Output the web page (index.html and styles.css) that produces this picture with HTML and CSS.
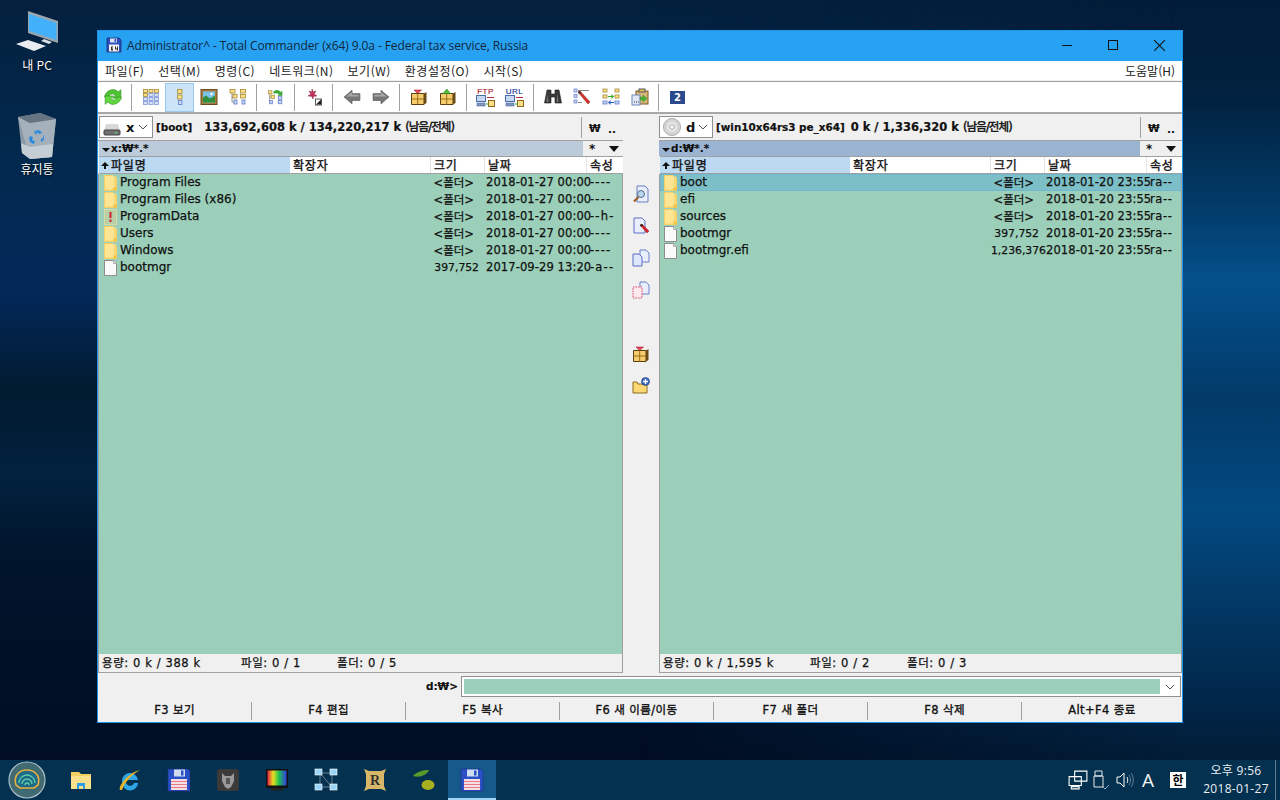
FILE: index.html
```html
<!DOCTYPE html>
<html lang="ko">
<head>
<meta charset="utf-8">
<title>Total Commander</title>
<link rel="stylesheet" href="styles.css">
</head>
<body>
<svg class="defs" aria-hidden="true">
  <defs>
    <symbol id="floppy" viewBox="0 0 16 16">
      <path d="M1 1h12l2 2v12H1z" fill="#2b4fb8" stroke="#1c2f78" stroke-width=".8"/>
      <rect x="4" y="1.500" width="7" height="4" fill="#d8e2f5"/><rect x="8.500" y="2" width="1.600" height="3" fill="#2b4fb8"/>
      <rect x="3" y="7.500" width="10" height="7" fill="#f4f2f2"/>
      <path d="M5 9.500h2v1H6v1h1v2H5zM9 9.500h1v2h1v-2h1v4h-1v-1H9z" fill="#333"/>
    </symbol>
    <symbol id="floppy-big" viewBox="0 0 24 24">
      <path d="M1 1h20l2 2v20H1z" fill="#2a50c8" stroke="#1c2f78" stroke-width=".6"/>
      <rect x="7" y="1.500" width="11" height="7" fill="#d0dcf0"/><rect x="14" y="2.500" width="2.500" height="5" fill="#2a50c8"/>
      <rect x="4" y="11" width="16" height="11" fill="#f6dfe2"/>
      <path d="M4 13.500h16M4 16.500h16M4 19.500h16" stroke="#e87a8a" stroke-width="1"/>
    </symbol>
    <symbol id="folder" viewBox="0 0 13 16">
      <path d="M.5.500h8.500l1 1v14H.5z" fill="#fde594"/>
      <path d="M10 1.500h2.500v14H.5v-1H9.500z" fill="#fcd874"/>
      <path d="M.5 15.500V.5h8.500M12.500 4v11.500H.5" fill="none" stroke="#f6cf66"/>
      <path d="M9.500 12.500h3v3h-3z" fill="#f3c041"/>
    </symbol>
    <symbol id="warnfolder" viewBox="0 0 13 16">
      <rect x=".5" y=".5" width="12" height="15" fill="#b9cfa8" stroke="#dcd9a0"/>
      <rect x="5.500" y="3" width="2" height="6" fill="#d0202a"/><rect x="5.500" y="10.500" width="2" height="2.500" fill="#d0202a"/>
    </symbol>
    <symbol id="file" viewBox="0 0 13 16">
      <path d="M.5.500h9l3 3v12H.5z" fill="#fafafa" stroke="#8c8c8c"/>
      <path d="M9.500.500v3h3" fill="#e0e0e0" stroke="#b0b0b0"/>
    </symbol>
    <symbol id="refresh" viewBox="1 1 16 16">
      <path d="M1.500 9C2 3.500 10 0 13.500 4.500L16 2.500V10H8.500l2.500-2.500C9 5.500 6 6 5 9z" fill="#4fc433" stroke="#2d8a1c" stroke-width=".5"/>
      <path d="M16.500 9c-.5 5.500-8.500 9-12 4.500L2 15.500V8h7.500L7 10.500c2 2 5 1.500 6-1.500z" fill="#62d63f" stroke="#2d8a1c" stroke-width=".5"/>
    </symbol>
    <symbol id="cols3" viewBox="0 0 18 18">
      <g fill="#ffdf85" stroke="#a48b3a" stroke-width=".8"><rect x="1.500" y="1.500" width="4" height="3"/><rect x="1.500" y="5.500" width="4" height="3"/><rect x="7" y="1.500" width="4" height="3"/><rect x="12.500" y="1.500" width="4" height="3"/></g>
      <g fill="#d6e2f8" stroke="#7f94d8" stroke-width=".8"><rect x="1.500" y="9.500" width="4" height="3"/><rect x="1.500" y="13.500" width="4" height="3"/><rect x="7" y="5.500" width="4" height="3"/><rect x="7" y="9.500" width="4" height="3"/><rect x="7" y="13.500" width="4" height="3"/><rect x="12.500" y="5.500" width="4" height="3"/><rect x="12.500" y="9.500" width="4" height="3"/><rect x="12.500" y="13.500" width="4" height="3"/></g>
    </symbol>
    <symbol id="cols1" viewBox="0 0 18 18">
      <g fill="#ffdf85" stroke="#a48b3a" stroke-width=".8"><rect x="6.500" y="1.500" width="4.500" height="4"/><rect x="6.500" y="7" width="4.500" height="4"/></g>
      <rect x="7.500" y="12.500" width="3.500" height="4" fill="#c6d8f4" stroke="#5f78c8" stroke-width=".8"/>
    </symbol>
    <symbol id="picture" viewBox="0 0 18 18">
      <rect x="1" y="1.500" width="16" height="15" fill="#a87b3e" stroke="#6b4a1f"/>
      <rect x="3" y="3.500" width="12" height="11" fill="#7cc3ea"/>
      <path d="M3 14.500v-5l3-2 4 3 5-3v7z" fill="#2f8f3c"/><circle cx="11.500" cy="6" r="1.200" fill="#fff"/>
    </symbol>
    <symbol id="cols2" viewBox="0 0 18 18">
      <path d="M3 5v9h2M3 9.500h2" stroke="#777" fill="none" stroke-width=".8"/>
      <g fill="#ffdf85" stroke="#a48b3a" stroke-width=".8"><rect x="1" y="1.500" width="5" height="3.500"/><rect x="4" y="6.500" width="4" height="3.500"/><rect x="11.500" y="1.500" width="5" height="3.500"/><rect x="11.500" y="6.500" width="5" height="3.500"/></g>
      <g fill="#c6d8f4" stroke="#5f78c8" stroke-width=".8"><rect x="5" y="12" width="3" height="4"/><rect x="13" y="12" width="3" height="4"/></g>
    </symbol>
    <symbol id="sync" viewBox="0 0 20 18">
      <path d="M3 5v10h2M3 9h2" stroke="#777" fill="none" stroke-width=".8"/>
      <g fill="#ffdf85" stroke="#a48b3a" stroke-width=".8"><rect x="1.500" y="2" width="4" height="3.500"/><rect x="4.500" y="7" width="4" height="3.500"/></g>
      <g fill="#c6d8f4" stroke="#5f78c8" stroke-width=".8"><rect x="3" y="13" width="3" height="3.500"/><rect x="12.500" y="8" width="4" height="3.500"/><rect x="12.500" y="13" width="4" height="3.500"/></g>
      <path d="M7 3c3-2.500 6-2.500 8 .5L17 2v5.500h-5.500L13.300 6C11.500 4.500 9.500 4.500 7.500 5.500z" fill="#3ca83a"/>
    </symbol>
    <symbol id="star" viewBox="0 0 18 18">
      <path d="M7 1l1 3 3-1-2 3 3 2-3.500.3L8 11 6.700 8.300 3 8l3-2-2-3 3 1z" fill="#c22f58" stroke="#8f2144" stroke-width=".5"/>
      <rect x="10.500" y="11" width="6" height="6" fill="#fff" stroke="#555"/><path d="M11 16.500l5-5v5z" fill="#222"/>
    </symbol>
    <symbol id="left" viewBox="0 0 16 16"><path d="M1 8l7-6v3h7v6H8v3z" fill="#777" stroke="#5e5e5e" stroke-width=".7"/><path d="M2.500 8L8 3.500V6h6v1.500H4z" fill="#a6a6a6"/></symbol>
    <symbol id="right" viewBox="0 0 16 16"><path d="M15 8L8 2v3H1v6h7v3z" fill="#777" stroke="#5e5e5e" stroke-width=".7"/><path d="M13.500 8L8 3.500V6H2v1.500h10z" fill="#a6a6a6"/></symbol>
    <symbol id="boxred" viewBox="0 0 18 18">
      <path d="M1.500 5.500h12.500v11H1.500z" fill="#f6cd6c" stroke="#5b3f10"/><path d="M14 5.500l2.500-1.500v11L14 16.500z" fill="#6a4a16"/>
      <path d="M1.500 11h12.500M7.700 5.500v11" stroke="#9b6d1d"/><path d="M4 2h7.500L7.700 5.500z" fill="#e84a5a" stroke="#a82030" stroke-width=".6"/>
    </symbol>
    <symbol id="boxgreen" viewBox="0 0 18 18">
      <path d="M1.500 5.500h12.500v11H1.500z" fill="#f6cd6c" stroke="#5b3f10"/><path d="M14 5.500l2.500-1.500v11L14 16.500z" fill="#6a4a16"/>
      <path d="M1.500 11h12.500M7.700 5.500v11" stroke="#9b6d1d"/><path d="M4 5.500h7.500L7.700 1z" fill="#55c03a" stroke="#2e8a1e" stroke-width=".6"/>
    </symbol>
    <symbol id="net" viewBox="0 0 20 12">
      <rect x=".5" y=".5" width="9" height="6" fill="#c6d8f4" stroke="#4a6aa8"/><rect x="1" y="8" width="8" height="3" fill="#7f94bc" stroke="#4a6aa8" stroke-width=".6"/>
      <rect x="12.500" y="5.500" width="6" height="6" fill="#ffdf85" stroke="#8a6a20"/><path d="M10 9h3" stroke="#2fa52a"/><path d="M11 2.500h7" stroke="#b02a3a"/>
    </symbol>
    <symbol id="bino" viewBox="0 0 18 18">
      <path d="M3 2h4v4h4V2h4l2.500 13H11V9H7v6H.5z" fill="#3a3a3a" stroke="#1c1c1c" stroke-width=".6"/>
      <path d="M3.500 6l-1 8h2zM13.500 6l-1 8h2z" fill="#777"/>
    </symbol>
    <symbol id="edit" viewBox="0 0 18 18">
      <g fill="#c6d8f4" stroke="#5f78c8" stroke-width=".7"><rect x="1" y="1" width="3" height="3"/><rect x="1" y="6.500" width="3" height="3"/><rect x="1" y="12" width="3" height="3"/></g>
      <path d="M5 2.500h11M5 14.500h4" stroke="#888"/>
      <path d="M5 4l2-1 10 11-2 2z" fill="#d8322a" stroke="#8a1a14" stroke-width=".5"/><path d="M5 4l2-1 1 2-2 1z" fill="#333"/>
    </symbol>
    <symbol id="multi" viewBox="0 0 18 18">
      <g fill="#ffdf85" stroke="#a48b3a" stroke-width=".8"><rect x="1" y="1" width="4" height="3"/><rect x="13" y="1" width="4" height="3"/><rect x="1" y="7" width="4" height="3"/><rect x="13" y="7" width="4" height="3"/></g>
      <g fill="#c6d8f4" stroke="#5f78c8" stroke-width=".8"><rect x="1" y="13" width="4" height="3"/><rect x="13" y="13" width="4" height="3"/></g>
      <path d="M6 8h3.500V6L12 8.500 9.500 11V9H6z" fill="#2fa52a"/><path d="M12 14H8.500v-2L6 14.500 8.500 17v-2H12z" fill="#2a60c0"/>
    </symbol>
    <symbol id="clip" viewBox="0 0 18 18">
      <rect x="5" y="3" width="12" height="13" fill="#d8b878" stroke="#7a5a20"/><rect x="8" y="1" width="6" height="3" fill="#e2c060" stroke="#555"/>
      <rect x="1" y="7" width="8" height="10" fill="#e0e8f8" stroke="#6d86b8"/><path d="M3 14h1M5 14h1M7 14h1" stroke="#333"/>
      <path d="M9 9h3V7l4 3.500L12 14v-2H9z" fill="#4cb036" stroke="#2e8a1e" stroke-width=".4"/>
    </symbol>
    <symbol id="viewdoc" viewBox="0 0 18 18">
      <path d="M5 1h8l3 3v13H5z" fill="#e8eefb" stroke="#6a7fc0"/>
      <circle cx="9" cy="9" r="3.500" fill="#b8d4ee" stroke="#5a6f90"/><path d="M6.500 12L2 16.500" stroke="#9a5a2a" stroke-width="2.200"/>
    </symbol>
    <symbol id="editdoc" viewBox="0 0 18 18">
      <path d="M2 1h8l3 3v12H2z" fill="#e8eefb" stroke="#5a6fc8"/>
      <path d="M8 8l2-1 7 7-2 2z" fill="#d8202a" stroke="#8a1a14" stroke-width=".4"/><path d="M8 8l2-1 1 1-2 2z" fill="#222"/>
    </symbol>
    <symbol id="copydoc" viewBox="0 0 18 18">
      <path d="M8 1h6l3 3v9H8z" fill="#e8eefb" stroke="#6a7fc8"/><path d="M1 5h6l3 3v9H1z" fill="#dfe7fa" stroke="#5a6fc8"/>
    </symbol>
    <symbol id="movedoc" viewBox="0 0 18 18">
      <path d="M8 1h6l3 3v9H8z" fill="#e8eefb" stroke="#6a7fc8"/><path d="M1 6h9v11H1z" fill="#fde8ee" stroke="#e04a68" stroke-dasharray="1.500 1"/>
    </symbol>
    <symbol id="newfolder" viewBox="0 0 18 18">
      <path d="M1 5h4l1 2h9v9H1z" fill="#fbd872" stroke="#8a6a20"/>
      <circle cx="13.500" cy="4.500" r="4" fill="#3a6ac0" stroke="#1e3a7a" stroke-width=".6"/><path d="M13.500 2v5M11 4.500h5" stroke="#fff" stroke-width="1.300"/>
    </symbol>
    <symbol id="hdd" viewBox="0 0 18 14">
      <path d="M3 2h12l2 7H1z" fill="#d8d8d8"/><rect x="1" y="8" width="16" height="5" rx="1" fill="#6f6f6f" stroke="#444"/><rect x="12" y="10" width="2" height="1.500" fill="#5fd060"/>
    </symbol>
    <symbol id="cd" viewBox="0 0 18 18">
      <circle cx="9" cy="9" r="8.500" fill="#d5d5d5" stroke="#aaa"/><circle cx="9" cy="9" r="5" fill="#e6e6e6"/><circle cx="9" cy="9" r="2.200" fill="#fff" stroke="#aaa"/>
    </symbol>
    <symbol id="chev" viewBox="0 0 10 6"><path d="M1 1l4 4 4-4" fill="none" stroke="#555"/></symbol>
  </defs>
</svg>

<main class="desktop">
  <div class="desk-icon desk-pc">
    <svg class="pc-art" viewBox="0 0 46 40"><path d="M14 0l30 10v22l-30-10z" fill="#9aa5ad"/><path d="M15 3l27.500 9v17L15 20z" fill="#42b0fb"/><path d="M30 28l8 3-3 2-8-3z" fill="#d8dde0"/><path d="M2 33l12-4 18 6-12 5z" fill="#e9edf0"/></svg>
    <span>내 PC</span>
  </div>
  <div class="desk-icon desk-bin">
    <svg class="bin-art" viewBox="0 0 40 46"><path d="M1 4l22-4 16 6-4 38-22 2-8-6z" fill="#8a98a5"/><path d="M1 4l12 6 26-4-4 38-22 2z" fill="#a4b1ba"/><path d="M4 30l9 4 23-3-1 13-22 2-8-6z" fill="#c4ced4"/><path d="M13 10L1 4l22-4 16 6z" fill="#667380"/><path d="M17 19c3-3 7-2 8 1l-3 1-2-2-1 3zM26 22c2 3 1 6-2 7v-3l2-1zM13 23l3 1-1 3 3 1-1 3c-4-1-6-4-4-8z" fill="#2a8ae0"/></svg>
    <span>휴지통</span>
  </div>

  <section class="window">
    <header class="titlebar">
      <svg class="title-icon"><use href="#floppy"/></svg>
      <span class="title-text">Administrator^ - Total Commander (x64) 9.0a - Federal tax service, Russia</span>
      <div class="caption">
        <span class="cap-btn"><i class="cap-min"></i></span>
        <span class="cap-btn"><i class="cap-max"></i></span>
        <span class="cap-btn"><svg class="cap-x" viewBox="0 0 10 10"><path d="M0 0l10 10M10 0L0 10" stroke="#111" fill="none"/></svg></span>
      </div>
    </header>

    <nav class="menubar">
      <span>파일(F)</span><span>선택(M)</span><span>명령(C)</span><span>네트워크(N)</span><span>보기(W)</span><span>환경설정(O)</span><span>시작(S)</span>
      <span class="menu-help">도움말(H)</span>
    </nav>

    <div class="toolbar">
      <span class="tb"><svg><use href="#refresh"/></svg></span><i class="sep"></i>
      <span class="tb"><svg><use href="#cols3"/></svg></span>
      <span class="tb on"><svg><use href="#cols1"/></svg></span>
      <span class="tb"><svg><use href="#picture"/></svg></span>
      <span class="tb"><svg><use href="#cols2"/></svg></span><i class="sep"></i>
      <span class="tb"><svg><use href="#sync"/></svg></span><i class="sep"></i>
      <span class="tb"><svg><use href="#star"/></svg></span><i class="sep"></i>
      <span class="tb"><svg><use href="#left"/></svg></span>
      <span class="tb"><svg><use href="#right"/></svg></span><i class="sep"></i>
      <span class="tb"><svg><use href="#boxred"/></svg></span>
      <span class="tb"><svg><use href="#boxgreen"/></svg></span><i class="sep"></i>
      <span class="tb tb-label"><b class="lbl lbl-ftp">FTP</b><svg><use href="#net"/></svg></span>
      <span class="tb tb-label"><b class="lbl lbl-url">URL</b><svg><use href="#net"/></svg></span><i class="sep"></i>
      <span class="tb"><svg><use href="#bino"/></svg></span>
      <span class="tb"><svg><use href="#edit"/></svg></span>
      <span class="tb"><svg><use href="#multi"/></svg></span>
      <span class="tb"><svg><use href="#clip"/></svg></span><i class="sep"></i>
      <span class="tb"><span class="badge-two">2</span></span>
    </div>

    <div class="panes">
      <section class="pane pane-l">
        <div class="drivebar">
          <div class="combo"><svg class="drv drv-hdd"><use href="#hdd"/></svg><b>x</b><svg class="chev"><use href="#chev"/></svg></div>
          <span class="free"><span class="vol">[boot]</span>133,692,608 k / 134,220,217 k <span class="ko">(남음/전체)</span></span>
          <span class="root"><b>₩</b><b class="dots">..</b></span>
        </div>
        <div class="pathbar">
          <div class="path path-off"><i class="tri"></i>x:₩*.*</div>
          <span class="hist"><b>*</b><i class="tri-lg"></i></span>
        </div>
        <div class="head cols-l">
          <span class="sorted"><i class="up"></i>파일명</span><span>확장자</span><span>크기</span><span>날짜</span><span>속성</span>
        </div>
        <div class="list">
          <div class="row cols-l"><span class="nm"><svg><use href="#folder"/></svg>Program Files</span><span></span><span class="sz dir">&lt;폴더&gt;</span><span class="dt">2018-01-27 00:00</span><span class="at">----</span></div>
          <div class="row cols-l"><span class="nm"><svg><use href="#folder"/></svg>Program Files (x86)</span><span></span><span class="sz dir">&lt;폴더&gt;</span><span class="dt">2018-01-27 00:00</span><span class="at">----</span></div>
          <div class="row cols-l"><span class="nm"><svg><use href="#warnfolder"/></svg>ProgramData</span><span></span><span class="sz dir">&lt;폴더&gt;</span><span class="dt">2018-01-27 00:00</span><span class="at">--h-</span></div>
          <div class="row cols-l"><span class="nm"><svg><use href="#folder"/></svg>Users</span><span></span><span class="sz dir">&lt;폴더&gt;</span><span class="dt">2018-01-27 00:00</span><span class="at">----</span></div>
          <div class="row cols-l"><span class="nm"><svg><use href="#folder"/></svg>Windows</span><span></span><span class="sz dir">&lt;폴더&gt;</span><span class="dt">2018-01-27 00:00</span><span class="at">----</span></div>
          <div class="row cols-l"><span class="nm"><svg><use href="#file"/></svg>bootmgr</span><span></span><span class="sz">397,752</span><span class="dt">2017-09-29 13:20</span><span class="at">-a--</span></div>
        </div>
        <div class="status st-l"><span>용량: 0 k / 388 k</span><span>파일: 0 / 1</span><span>폴더: 0 / 5</span></div>
      </section>

      <aside class="midbar">
        <svg><use href="#viewdoc"/></svg>
        <svg><use href="#editdoc"/></svg>
        <svg><use href="#copydoc"/></svg>
        <svg><use href="#movedoc"/></svg>
        <i class="mid-gap"></i>
        <svg><use href="#boxred"/></svg>
        <svg><use href="#newfolder"/></svg>
      </aside>

      <section class="pane pane-r">
        <div class="drivebar">
          <div class="combo"><svg class="drv"><use href="#cd"/></svg><b>d</b><svg class="chev"><use href="#chev"/></svg></div>
          <span class="free"><span class="vol">[win10x64rs3 pe_x64]</span>0 k / 1,336,320 k <span class="ko">(남음/전체)</span></span>
          <span class="root"><b>₩</b><b class="dots">..</b></span>
        </div>
        <div class="pathbar">
          <div class="path path-on"><i class="tri"></i>d:₩*.*</div>
          <span class="hist"><b>*</b><i class="tri-lg"></i></span>
        </div>
        <div class="head cols-r">
          <span class="sorted"><i class="up"></i>파일명</span><span>확장자</span><span>크기</span><span>날짜</span><span>속성</span>
        </div>
        <div class="list">
          <div class="row cols-r row-cur"><span class="nm"><svg><use href="#folder"/></svg>boot</span><span></span><span class="sz dir">&lt;폴더&gt;</span><span class="dt">2018-01-20 23:55</span><span class="at">ra--</span></div>
          <div class="row cols-r"><span class="nm"><svg><use href="#folder"/></svg>efi</span><span></span><span class="sz dir">&lt;폴더&gt;</span><span class="dt">2018-01-20 23:55</span><span class="at">ra--</span></div>
          <div class="row cols-r"><span class="nm"><svg><use href="#folder"/></svg>sources</span><span></span><span class="sz dir">&lt;폴더&gt;</span><span class="dt">2018-01-20 23:55</span><span class="at">ra--</span></div>
          <div class="row cols-r"><span class="nm"><svg><use href="#file"/></svg>bootmgr</span><span></span><span class="sz">397,752</span><span class="dt">2018-01-20 23:55</span><span class="at">ra--</span></div>
          <div class="row cols-r"><span class="nm"><svg><use href="#file"/></svg>bootmgr.efi</span><span></span><span class="sz">1,236,376</span><span class="dt">2018-01-20 23:55</span><span class="at">ra--</span></div>
        </div>
        <div class="status st-r"><span>용량: 0 k / 1,595 k</span><span>파일: 0 / 2</span><span>폴더: 0 / 3</span></div>
      </section>
    </div>

    <div class="cmdline">
      <label class="prompt">d:₩&gt;</label>
      <div class="cmdbox"><div class="cmdfill"></div><svg class="chev cmd-chev"><use href="#chev"/></svg></div>
    </div>

    <div class="fkeys">
      <span>F3 보기</span><span>F4 편집</span><span>F5 복사</span><span>F6 새 이름/이동</span><span>F7 새 폴더</span><span>F8 삭제</span><span>Alt+F4 종료</span>
    </div>
  </section>
</main>

<footer class="taskbar">
  <div class="start">
    <svg viewBox="0 0 38 38"><defs><radialGradient id="orb"><stop offset="0" stop-color="#2f6a78"/><stop offset="1" stop-color="#456a70"/></radialGradient></defs><circle cx="19" cy="19" r="18" fill="url(#orb)" stroke="#a8c0c8" stroke-width="1.200"/><path d="M8 24c-3-10 4-15 11-15s14 5 11 15l-4 3H12z" fill="#1f6a88" stroke="#e6b040" stroke-width="1.600"/><path d="M11 22a8 8 0 0 1 16 0M14 23a5 5 0 0 1 10 0M17 24a2 2 0 0 1 4 0" fill="none" stroke="#5fd0a8" stroke-width="1.300"/></svg>
  </div>
  <div class="tasks">
    <span class="task"><svg viewBox="0 0 24 24"><path d="M2 4h8l2 2h10v15H2z" fill="#f3cf62"/><path d="M2 8h20v13H2z" fill="#fbe08c"/><path d="M8 15h8v6h-2v-3h-4v3H8z" fill="#2e9fe6"/></svg></span>
    <span class="task"><svg viewBox="0 0 24 24"><path d="M4 14a8 8 0 0 1 16-2H8a4 4 0 0 0 8 3h4a8 8 0 0 1-16-1z" fill="#2ea6e8"/><path d="M2 22C0 18 10 5 22 2c-5 3-14 9-18 20z" fill="#e8b426"/></svg></span>
    <span class="task"><svg viewBox="0 0 24 24"><use href="#floppy-big"/></svg></span>
    <span class="task"><svg viewBox="0 0 24 24"><rect x="1" y="1" width="22" height="22" rx="3" fill="#3a3a3a"/><path d="M6 5l3 3h6l3-3v8l-3 6-3 2-3-2-3-6z" fill="#9a9a9a"/><path d="M10 10h4v6h-4z" fill="#555"/></svg></span>
    <span class="task"><svg viewBox="0 0 24 24"><defs><linearGradient id="rb"><stop offset="0" stop-color="#e02040"/><stop offset=".3" stop-color="#e8e020"/><stop offset=".6" stop-color="#20c050"/><stop offset="1" stop-color="#3040e0"/></linearGradient></defs><rect x="1" y="1" width="22" height="19" fill="#111"/><rect x="2.500" y="2.500" width="19" height="15" fill="url(#rb)"/><rect x="6" y="20" width="12" height="2.500" fill="#222"/></svg></span>
    <span class="task"><svg viewBox="0 0 24 24"><path d="M6 5h12M6 19h12M6 5v14M18 5v14M6 5l12 14" stroke="#8a96a0" stroke-width=".8" fill="none"/><g fill="#9ad4f8" stroke="#fff" stroke-width=".6"><rect x="1" y="1" width="7" height="6"/><rect x="16" y="1" width="7" height="6"/><rect x="1" y="16" width="7" height="6"/><rect x="16" y="16" width="7" height="6"/></g></svg></span>
    <span class="task"><svg viewBox="0 0 24 24"><path d="M1 1l5 2h12l5-2-2 5v12l2 5-5-2H6l-5 2 2-5V6z" fill="#d8b868"/><text x="12" y="17" class="r-mark">R</text></svg></span>
    <span class="task"><svg viewBox="0 0 24 24"><path d="M1 8c4-5 11-6 16-6-2 5-9 8-16 6z" fill="#5a9a2a"/><ellipse cx="16" cy="17" rx="6.500" ry="5" fill="#a8b020"/></svg></span>
    <span class="task task-on"><svg viewBox="0 0 24 24"><use href="#floppy-big"/></svg></span>
  </div>
  <div class="tray">
    <svg class="t-net" viewBox="0 0 18 18"><path d="M6 1h11v9H6zM1 6h11v8H1zM3 15h7v2H3z" fill="#04304f" stroke="#fff"/></svg>
    <svg class="t-usb" viewBox="0 0 18 20"><path d="M3 1h7v5H3zM2 6h9v11H2z" fill="none" stroke="#e8e8e8"/><path d="M11 17l2 2 4-4" fill="none" stroke="#9ab0c0"/></svg>
    <svg class="t-vol" viewBox="0 0 18 18"><path d="M1 6h3l4-4v14l-4-4H1z" fill="none" stroke="#fff"/><path d="M11 6c1 2 1 4 0 6" fill="none" stroke="#fff"/><path d="M13 4c2 3 2 7 0 10M15 2c3 4 3 10 0 14" fill="none" stroke="#6a8498"/></svg>
    <span class="t-a">A</span>
    <span class="t-han">한</span>
    <div class="clock"><span>오후 9:56</span><span>2018-01-27</span></div>
    <i class="show-desk"></i>
  </div>
</footer>
</body>
</html>
```

FILE: styles.css
```css
* { box-sizing: border-box; }
html, body { margin: 0; height: 100%; overflow: hidden; }
body {
  width: 1280px; height: 800px; display: flex; flex-direction: column;
  font: 12px "DejaVu Sans", "Noto Sans CJK KR", sans-serif;
  color: #111;
  background: #02203d;
}
i { font-style: normal; display: block; }
.defs { position: absolute; width: 0; height: 0; }

.desktop {
  position: relative; flex: 1;
  background: linear-gradient(180deg, #03203e 0, #022a50 180px, #03295a 290px, #011a30 391px, #02223f 476px, #01152c 550px, #000d22 760px);
}
.desktop::before {
  content: ""; position: absolute; inset: 0 0 0 50%;
  background: linear-gradient(180deg, #011c38 0, #012240 100px, #023a66 200px, #04508c 280px, #023a68 400px, #034a82 510px, #023560 620px, #012749 700px, #011c36 760px);
  -webkit-mask-image: linear-gradient(90deg, transparent 0, #000 85%);
  mask-image: linear-gradient(90deg, transparent 0, #000 85%);
}
.desk-icon {
  position: absolute; left: 0; width: 74px; display: flex; flex-direction: column; align-items: center;
  color: #fff; font: 12px "Noto Sans CJK KR", sans-serif; text-shadow: 0 1px 2px #000;
}
.desk-pc { top: 11px; gap: 5px; }
.pc-art { width: 46px; height: 40px; }
.desk-bin { top: 113px; gap: 1px; }
.bin-art { width: 40px; height: 46px; }

.window {
  position: absolute; left: 97px; top: 30px; width: 1086px; height: 693px;
  border: 1px solid #1f93e6; background: #f0f0f0;
  display: flex; flex-direction: column;
}
.titlebar { height: 30px; padding-bottom: 2px; background: #27a2f2; display: flex; align-items: center; flex: none; }
.title-icon { width: 16px; height: 16px; margin: 0 5px 0 8px; }
.title-text { font: 12px "Open Sans", sans-serif; letter-spacing: -.1px; color: #12263a; white-space: nowrap; }
.caption { margin-left: auto; display: flex; height: 100%; }
.cap-btn { width: 46px; display: flex; align-items: center; justify-content: center; }
.cap-min { width: 10px; height: 1px; background: #111; }
.cap-max { width: 10px; height: 10px; border: 1px solid #111; }
.cap-x { width: 11px; height: 11px; }

.menubar {
  height: 21px; flex: none; background: #fff; border-bottom: 1px solid #a0a0a0;
  display: flex; align-items: center; padding: 0 7px 2px; gap: 14px;
  font: 12px "Noto Sans CJK KR", sans-serif; letter-spacing: .5px; color: #222;
  box-shadow: inset 0 -1px 0 #f0f0f0;
}
.menu-help { margin-left: auto; letter-spacing: 0; }

.toolbar {
  height: 32px; flex: none; background: #fff; border-bottom: 2px solid #a8a8a8;
  display: flex; align-items: center;
}
.tb { width: 29px; height: 29px; display: flex; align-items: center; justify-content: center; position: relative; border: 1px solid transparent; }
.tb svg { width: 18px; height: 18px; }
.tb.on { background: #cce4f7; border-color: #99c9ef; }
.sep { width: 9px; height: 27px; position: relative; }
.sep::before { content: ""; position: absolute; left: 4px; top: 0; width: 1px; height: 27px; background: #a0a0a0; }
.tb-label svg { width: 20px; height: 12px; margin-top: 8px; }
.lbl { position: absolute; top: 3px; left: 0; right: 0; text-align: center; font: 400 8px "Liberation Sans", sans-serif; letter-spacing: .5px; -webkit-text-stroke: .2px; }
.lbl-ftp { color: #b02a3a; }
.lbl-url { color: #1f3f9a; }
.badge-two {
  width: 15px; height: 13px; background: #2b4a8e; color: #fff;
  font: 700 10px/13px "DejaVu Sans", sans-serif; text-align: center; display: block;
}

.panes { flex: 1; display: grid; grid-template-columns: 525px 36px 523px; min-height: 0; }
.pane { display: flex; flex-direction: column; min-width: 0; }
.drivebar { height: 26px; flex: none; display: flex; align-items: center; position: relative; }
.pane-l .drivebar { padding-left: 1px; }
.combo {
  width: 54px; height: 22px; flex: none; background: #fff; border: 1px solid #8f8f8f;
  display: flex; align-items: center; padding-left: 3px; font-size: 13px;
}
.combo b { font-weight: 700; width: 16px; text-align: left; margin-left: 5px; }
.drv { width: 18px; height: 18px; flex: none; }
.drv-hdd { height: 14px; margin-top: 4px; }
.chev { width: 10px; height: 6px; margin-left: auto; margin-right: 4px; flex: none; }
.free { margin: -2px 0 0 3px; font-size: 11.5px; font-weight: 600; -webkit-text-stroke: .2px #111; white-space: nowrap; }
.vol { font-size: 10.4px; margin-right: 12px; }
.pane-r .vol { margin-right: 6px; }
.ko { font-weight: 400; letter-spacing: -.9px; font-size: 11.5px; margin-left: 0; -webkit-text-stroke: .45px #111; }
.root { position: absolute; right: 0; top: 3px; height: 21px; width: 42px; border-left: 1px solid #a0a0a0; display: flex; padding-left: 7px; align-items: center; font-size: 10.5px; }
.root b { width: 13px; }
.dots { margin-left: 6px; padding-top: 3px; }

.pathbar { height: 16px; flex: none; display: flex; border-top: 1px solid #a0a0a0; }
.path { width: 484px; display: flex; align-items: center; font-weight: 600; -webkit-text-stroke: .1px #111; font-size: 10.5px; padding: 0 0 2px 3px; }
.pane-l .path { margin-left: 1px; }
.pane-r .path { width: 481px; }
.path-off { background: #bccbda; }
.path-on { background: #9bb4d1; }
.tri { width: 0; height: 0; border: 4px solid transparent; border-top: 4px solid #111; border-bottom: 0; margin-right: 1px; margin-top: 4px; }
.hist { display: flex; align-items: center; gap: 14px; padding-left: 6px; font-size: 12px; }
.tri-lg { width: 0; height: 0; border: 5px solid transparent; border-top: 6px solid #111; border-bottom: 0; }

.head { height: 18px; flex: none; background: #fff; border-top: 1px solid #a0a0a0; border-bottom: 1px solid #a0a0a0; align-items: center; font: 12px/16px "Noto Sans CJK KR", sans-serif; letter-spacing: .8px; -webkit-text-stroke: .35px #111; }
.head > span { height: 16px; padding-left: 3px; border-right: 1px solid #e2e2e2; white-space: nowrap; }
.head > span:last-child { border-right: 0; }
.head .sorted { background: #bcd9f2; display: flex; align-items: center; padding-left: 2px; border-right: 0; }
.up { width: 0; height: 0; border: 4px solid transparent; border-bottom: 4px solid #111; border-top: 0; margin: 0 2px 3px 0; position: relative; }
.up::after { content: ""; position: absolute; left: -1px; top: 4px; width: 2px; height: 3px; background: #111; }

.cols-l, .cols-r { display: grid; }
.cols-l { grid-template-columns: 191px 141px 54px 105px 33px; margin-left: 1px; }
.cols-r { grid-template-columns: 190px 141px 54px 105px 33px; margin-left: 1px; }
.head.cols-l { grid-template-columns: 191px 141px 54px 102px 1fr; }
.head.cols-r { grid-template-columns: 190px 141px 54px 102px 1fr; }

.list { flex: 1; background: #9bcfb9; border-left: 1px solid #a0a0a0; border-right: 1px solid #a0a0a0; min-height: 0; }
.row { height: 17px; padding-bottom: 2px; align-items: center; margin-left: 0; font-size: 12px; -webkit-text-stroke: .25px #111; white-space: nowrap; }
.row-cur { background: #7dbfc6; box-shadow: inset 0 0 0 1px #6fb8d4; }
.nm { display: flex; align-items: center; padding-left: 5px; }
.cols-r .nm { padding-left: 4px; }
.nm svg { width: 13px; height: 16px; margin-right: 3px; flex: none; position: relative; top: 1px; }
.sz { text-align: right; padding-right: 6px; font-size: 10.8px; }
.sz.dir { padding-right: 11px; font-size: 11.5px; }
.dt { padding-left: 1px; font-size: 11.5px; letter-spacing: .1px; }
.at { font-size: 11.5px; letter-spacing: 1.2px; }
.cols-r .at { letter-spacing: .6px; }

.status { height: 19px; flex: none; display: grid; align-items: center; border: 1px solid #a0a0a0; border-top: 0; padding: 0 0 2px 3px; font-size: 11.5px; letter-spacing: .6px; -webkit-text-stroke: .25px #111; white-space: nowrap; }
.st-l { grid-template-columns: 139px 96px 1fr; }
.st-r { grid-template-columns: 147px 97px 1fr; }

.midbar { display: flex; flex-direction: column; align-items: center; padding-top: 71px; gap: 14px; }
.midbar svg { width: 18px; height: 18px; flex: none; }
.mid-gap { height: 18px; flex: none; }

.cmdline { height: 26px; flex: none; display: flex; align-items: center; padding-top: 1px; }
.prompt { width: 363px; text-align: right; font-weight: 600; font-size: 10.5px; -webkit-text-stroke: .1px #111; padding: 0 3px 2px 0; }
.cmdbox { width: 720px; height: 21px; background: #fff; border: 1px solid #8f8f8f; display: flex; align-items: center; padding: 2px; }
.cmdfill { flex: 1; height: 100%; background: #9bcfb9; }
.cmd-chev { margin: 0 3px 0 5px; }

.fkeys { height: 23px; flex: none; display: grid; grid-template-columns: repeat(6, 154px) 1fr; align-items: end; padding-bottom: 2px; }
.fkeys span { height: 18px; line-height: 16px; text-align: center; border-right: 1px solid #a0a0a0; font-size: 11.5px; letter-spacing: .4px; font-weight: 400; -webkit-text-stroke: .35px #111; }
.fkeys span:last-child { border-right: 0; }

.taskbar { height: 40px; flex: none; background: #03314f; display: flex; align-items: center; color: #fff; }
.start { width: 56px; height: 40px; display: flex; align-items: center; padding-left: 8px; }
.start svg { width: 38px; height: 38px; }
.tasks { display: flex; height: 100%; }
.task { width: 49px; height: 40px; display: flex; align-items: center; justify-content: center; }
.task svg { width: 24px; height: 24px; }
.task-on { background: #155a8a; border-bottom: 2px solid #9fd4f5; padding-top: 2px; width: 48px; }
.r-mark { font: 700 14px "Liberation Serif", serif; fill: #333; text-anchor: middle; }
.tray { margin-left: auto; display: flex; align-items: center; height: 100%; }
.t-net { width: 20px; height: 20px; margin-right: 4px; }
.t-usb { width: 18px; height: 20px; margin-right: 6px; }
.t-vol { width: 18px; height: 18px; margin-right: 5px; }
.t-a { font: 19px "Open Sans", sans-serif; width: 18px; text-align: center; color: #f4f4f4; }
.t-han { width: 16px; height: 16px; background: #fff; color: #000; font: 700 12px/16px "Noto Sans CJK KR", sans-serif; text-align: center; margin-left: 13px; }
.clock { width: 68px; margin-left: 16px; display: flex; flex-direction: column; align-items: center; font: 12px/18px "Open Sans", "Noto Sans CJK KR", sans-serif; letter-spacing: .3px; color: #e8eef2; white-space: nowrap; }
.show-desk { width: 1px; height: 40px; background: #5f7f95; margin: 0 4px 0 5px; }
```
